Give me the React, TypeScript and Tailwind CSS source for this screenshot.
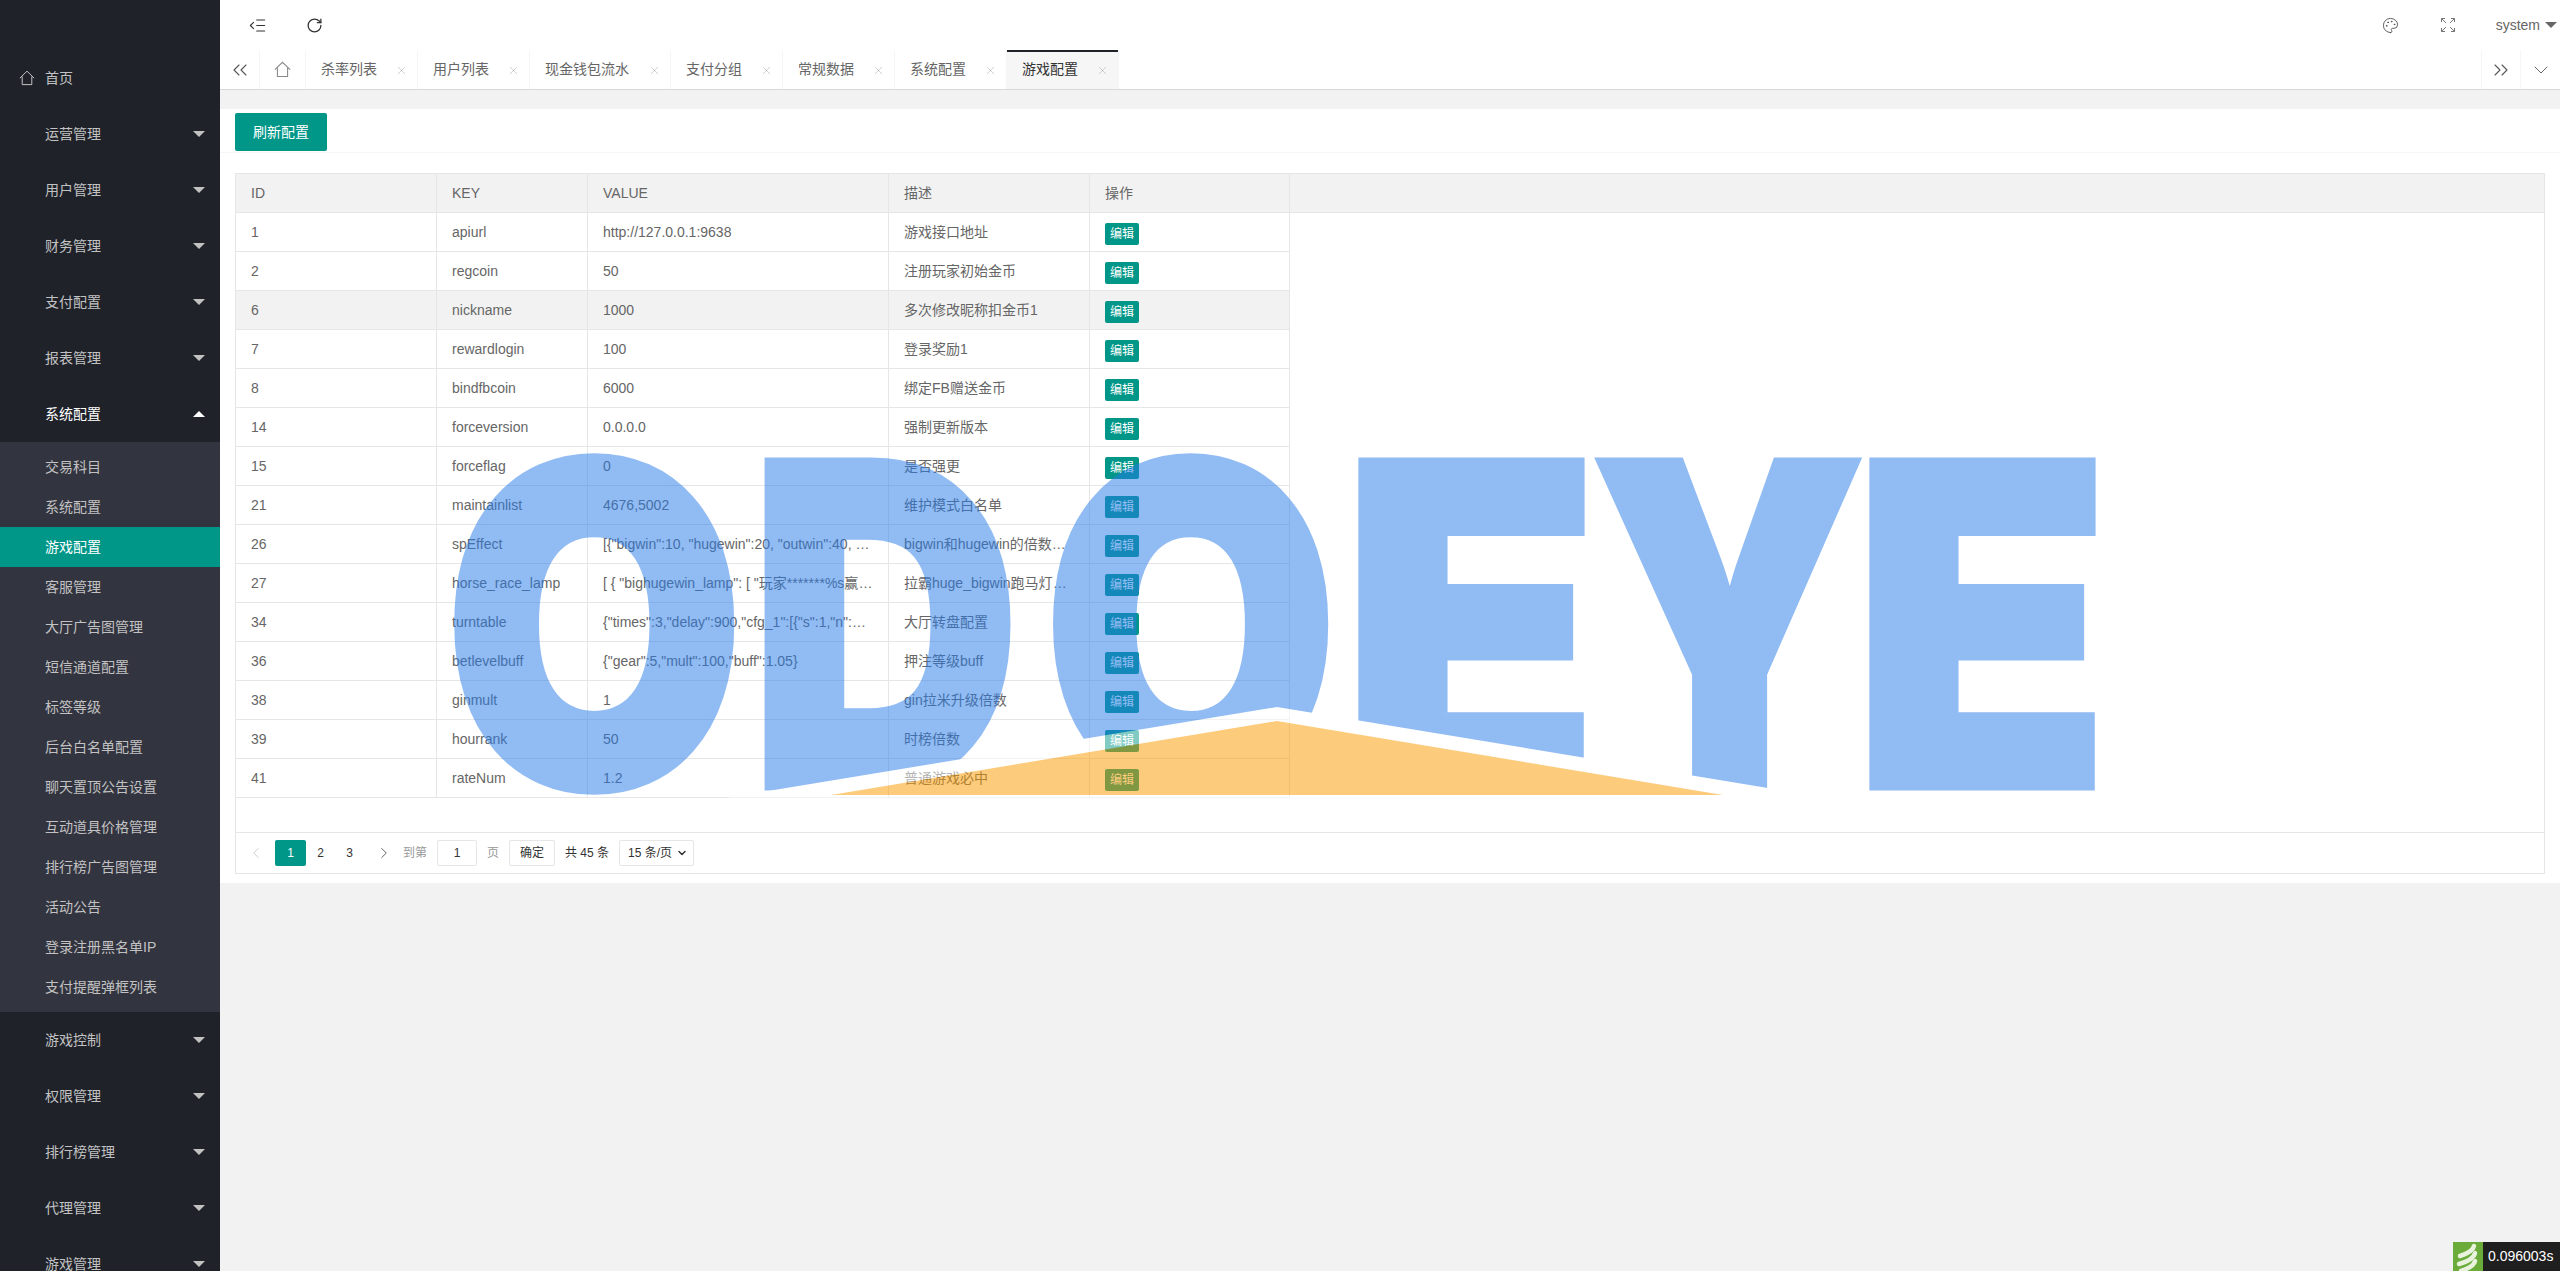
import React from "react";
import { ChevronsLeft, ChevronsRight, ChevronDown, ChevronLeft, ChevronRight, X, IndentDecrease, RotateCw, Palette } from "lucide-react";

const FONT = "font-['Liberation_Sans','Noto_Sans_CJK_SC',sans-serif]";

const topMenus1 = ["运营管理", "用户管理", "财务管理", "支付配置", "报表管理"];
const subMenus = ["交易科目", "系统配置", "游戏配置", "客服管理", "大厅广告图管理", "短信通道配置", "标签等级", "后台白名单配置", "聊天置顶公告设置", "互动道具价格管理", "排行榜广告图管理", "活动公告", "登录注册黑名单IP", "支付提醒弹框列表"];
const topMenus2 = ["游戏控制", "权限管理", "排行榜管理", "代理管理", "游戏管理"];

const tabs = [
  { label: "杀率列表", w: "w-[112px]" },
  { label: "用户列表", w: "w-[112px]" },
  { label: "现金钱包流水", w: "w-[141px]" },
  { label: "支付分组", w: "w-[112px]" },
  { label: "常规数据", w: "w-[112px]" },
  { label: "系统配置", w: "w-[112px]" },
  { label: "游戏配置", w: "w-[112px]", active: true },
];

const rows = [
  ["1", "apiurl", "http://127.0.0.1:9638", "游戏接口地址"],
  ["2", "regcoin", "50", "注册玩家初始金币"],
  ["6", "nickname", "1000", "多次修改昵称扣金币1"],
  ["7", "rewardlogin", "100", "登录奖励1"],
  ["8", "bindfbcoin", "6000", "绑定FB赠送金币"],
  ["14", "forceversion", "0.0.0.0", "强制更新版本"],
  ["15", "forceflag", "0", "是否强更"],
  ["21", "maintainlist", "4676,5002", "维护模式白名单"],
  ["26", "spEffect", '[{"bigwin":10, "hugewin":20, "outwin":40, "superwin":80, "megawin":100}]', "bigwin和hugewin的倍数配置表格内容"],
  ["27", "horse_race_lamp", '[ { "bighugewin_lamp": [ "玩家*******%s赢得大奖金币数量"', "拉霸huge_bigwin跑马灯配置内容"],
  ["34", "turntable", '{"times":3,"delay":900,"cfg_1":[{"s":1,"n":100,"m":200}]}', "大厅转盘配置"],
  ["36", "betlevelbuff", '{"gear":5,"mult":100,"buff":1.05}', "押注等级buff"],
  ["38", "ginmult", "1", "gin拉米升级倍数"],
  ["39", "hourrank", "50", "时榜倍数"],
  ["41", "rateNum", "1.2", "普通游戏必中"],
];

const HomeIcon = ({ size, color }: { size: number; color: string }) => (
  <svg width={size} height={size} viewBox="0 0 16 16" fill="none" stroke={color} strokeWidth="1">
    <path d="M0.8 8.2L8 1.2L15.2 8.2M3.2 6.4V14.6H12.8V6.4" />
  </svg>
);

const Caret = ({ up, className = "" }: { up?: boolean; className?: string }) => (
  <span className={`w-0 h-0 border-x-[6px] border-x-transparent ${up ? "border-b-[6px] border-b-white" : "border-t-[6px] border-t-[#c2c2c2]"} ${className}`} />
);

const MenuRow = ({ label, open }: { label: string; open?: boolean }) => (
  <div className={`h-[56px] shrink-0 flex items-center justify-between pl-[45px] pr-[15px] text-[14px] ${open ? "text-white" : "text-[#c2c2c2]"}`}>
    <span>{label}</span>
    <Caret up={open} />
  </div>
);

const Sidebar = () => (
  <aside className="w-[220px] shrink-0 h-full overflow-hidden bg-[#20222a] flex flex-col">
    <div className="h-[50px] shrink-0" />
    <div className="h-[56px] shrink-0 flex items-center pl-[19px] text-[14px] text-[#c2c2c2]">
      <span className="mr-[10px] flex"><HomeIcon size={16} color="#c2c2c2" /></span>
      <span>首页</span>
    </div>
    {topMenus1.map((m) => <MenuRow key={m} label={m} />)}
    <MenuRow label="系统配置" open />
    <div className="shrink-0 bg-[#32343f] py-[5px]">
      {subMenus.map((s) => (
        <div key={s} className={`h-[40px] flex items-center pl-[45px] text-[14px] ${s === "游戏配置" ? "bg-[#009688] text-white" : "text-[#c2c2c2]"}`}>{s}</div>
      ))}
    </div>
    {topMenus2.map((m) => <MenuRow key={m} label={m} />)}
  </aside>
);

const FullscreenIcon = () => (
  <svg width="14" height="14" viewBox="0 0 14 14" fill="none" stroke="#777" strokeWidth="1">
    <path d="M0.5 4V0.5H4M0.5 0.5L5 5M10 0.5H13.5V4M13.5 0.5L9 5M0.5 10V13.5H4M0.5 13.5L5 9M10 13.5H13.5V10M13.5 13.5L9 9" />
  </svg>
);

const Header = () => (
  <div className="h-[50px] shrink-0 bg-white flex items-center">
    <div className="w-[75px] flex justify-center"><IndentDecrease size={19} strokeWidth={1.4} className="text-[#333]" /></div>
    <div className="w-[38px] flex justify-center"><RotateCw size={17} strokeWidth={1.8} className="text-[#333]" /></div>
    <div className="flex-1" />
    <Palette size={17} strokeWidth={1.2} className="text-[#444] mr-[42px]" />
    <FullscreenIcon />
    <span className="ml-[41px] text-[14px] text-[#666]">system</span>
    <Caret className="ml-[5px] mr-[3px] !border-t-[#666]" />
  </div>
);

const Tabs = () => (
  <div className="h-[40px] shrink-0 bg-white border-b border-[#d8d8d8] flex text-[14px] text-[#666]">
    <div className="w-[40px] flex items-center justify-center border-r border-[#f6f6f6]"><ChevronsLeft size={24} strokeWidth={1.1} className="text-[#555]" /></div>
    <div className="w-[46px] flex items-center justify-center border-r border-[#f6f6f6]"><HomeIcon size={17} color="#888" /></div>
    {tabs.map((t) => (
      <div key={t.label} className={`${t.w} relative flex items-center pl-[15px] border-r border-[#f6f6f6] ${t.active ? "bg-[#f6f6f6] text-[#333]" : ""}`}>
        {t.active && <span className="absolute left-0 right-0 top-0 h-[2px] bg-[#20222a]" />}
        <span>{t.label}</span>
        <X size={13} strokeWidth={1} className="absolute right-[9px] top-[14px] text-[#aaa]" />
      </div>
    ))}
    <div className="flex-1" />
    <div className="w-[40px] flex items-center justify-center border-x border-[#f6f6f6]"><ChevronsRight size={24} strokeWidth={1.1} className="text-[#555]" /></div>
    <div className="w-[39px] flex items-center justify-center"><ChevronDown size={24} strokeWidth={0.9} className="text-[#555]" /></div>
  </div>
);

const cols = ["w-[201px]", "w-[151px]", "w-[301px]", "w-[201px]", "w-[200px]"];

const Cell = ({ w, children }: { w: string; children: React.ReactNode }) => (
  <div className={`${w} shrink-0 px-[15px] flex items-center border-r border-[#e6e6e6] h-full min-w-0`}>
    <div className="truncate w-full leading-[20px]">{children}</div>
  </div>
);

const Table = () => (
  <div className="border border-[#e6e6e6] text-[14px] text-[#666]">
    <div className="h-[39px] bg-[#f2f2f2] border-b border-[#e6e6e6] flex">
      {["ID", "KEY", "VALUE", "描述", "操作"].map((h, i) => <Cell key={h} w={cols[i]}>{h}</Cell>)}
    </div>
    <div className="h-[619px]">
      {rows.map((r) => (
        <div key={r[0]} className={`h-[39px] w-[1054px] flex border-b border-[#e6e6e6] ${r[0] === "6" ? "bg-[#f2f2f2]" : ""}`}>
          {r.map((c, i) => <Cell key={i} w={cols[i]}>{c}</Cell>)}
          <Cell w={cols[4]}>
            <span className="inline-flex items-center justify-center w-[34px] h-[22px] mt-[3px] rounded-[2px] bg-[#009688] text-white text-[12px] align-middle">编辑</span>
          </Cell>
        </div>
      ))}
    </div>
    <div className="h-[41px] border-t border-[#e6e6e6] flex items-center text-[12px] text-[#333] pl-[11px]">
      <ChevronLeft size={18} strokeWidth={1} className="text-[#bbb] mr-[10px]" />
      <span className="w-[31px] h-[26px] flex items-center justify-center rounded-[2px] bg-[#009688] text-white">1</span>
      <span className="w-[29px] text-center">2</span>
      <span className="w-[29px] text-center">3</span>
      <ChevronRight size={18} strokeWidth={1} className="ml-[11px] mr-[10px]" />
      <span className="text-[#999]">到第</span>
      <span className="ml-[10px] w-[40px] h-[26px] flex items-center justify-center border border-[#e6e6e6] rounded-[2px]">1</span>
      <span className="ml-[10px] text-[#999]">页</span>
      <span className="ml-[10px] w-[46px] h-[26px] flex items-center justify-center border border-[#e6e6e6] rounded-[2px]">确定</span>
      <span className="ml-[10px]">共 45 条</span>
      <span className="ml-[10px] w-[75px] h-[26px] flex items-center justify-between pl-[8px] pr-[5px] border border-[#e6e6e6] rounded-[2px]">15 条/页<ChevronDown size={12} strokeWidth={3} /></span>
    </div>
  </div>
);

const Letter = ({ c, x, sx }: { c: string; x: number; sx: number }) => (
  <text transform={`translate(${x} 787) scale(${sx} 1)`} fontSize={448} fill="#277be9" stroke="#277be9" strokeWidth={7} className="font-['Inter','Liberation_Sans',sans-serif] font-black">{c}</text>
);

const Watermark = () => (
  <svg className="absolute inset-0 pointer-events-none" width="2560" height="1271" viewBox="0 0 2560 1271">
    <g opacity="0.51">
      <Letter c="O" x={444} sx={0.865} />
      <Letter c="D" x={750} sx={0.835} />
      <Letter c="O" x={1043} sx={0.85} />
      <Letter c="E" x={1342} sx={0.935} />
      <Letter c="Y" x={1591} sx={0.79} />
      <Letter c="E" x={1853} sx={0.935} />
      <polygon points="689,804 1277,707 1865,804" fill="#fff" />
      <rect x="689" y="800" width="1176" height="8" fill="#fff" />
      <polygon points="831,795 1277,721 1723,795" fill="#fb9b00" />
    </g>
  </svg>
);

const Badge = () => (
  <div className="absolute right-0 bottom-0 h-[29px] flex">
    <div className="w-[30px] h-full bg-[#6aab3a] flex items-center justify-center overflow-hidden">
      <svg width="24" height="29" viewBox="0 0 24 29" fill="none" stroke="#e8f2dc" strokeWidth="4.5" strokeLinecap="round">
        <path d="M4 14 C10 12 17 9 18 4" />
        <path d="M3 22 C10 20 18 16 19 11" />
        <path d="M5 29 C11 27 18 24 19 19" />
      </svg>
    </div>
    <div className="w-[77px] h-full bg-[#1f1f1f] text-white text-[14px] flex items-center pl-[5px]">0.096003s</div>
  </div>
);

export default function App() {
  return (
    <div className={`${FONT} relative w-[2560px] h-[1271px] overflow-hidden flex bg-[#f2f2f2]`}>
      <Sidebar />
      <main className="flex-1 min-w-0 flex flex-col">
        <Header />
        <Tabs />
        <div className="h-[19px] shrink-0" />
        <section className="bg-white h-[774px] shrink-0 flex flex-col">
          <div className="h-[44px] border-b border-[#f6f6f6] px-[15px] pt-[4px]">
            <span className="w-[92px] h-[38px] flex items-center justify-center rounded-[2px] bg-[#009688] text-white text-[14px]">刷新配置</span>
          </div>
          <div className="px-[15px] pt-[20px]">
            <Table />
          </div>
        </section>
      </main>
      <Watermark />
      <Badge />
    </div>
  );
}
